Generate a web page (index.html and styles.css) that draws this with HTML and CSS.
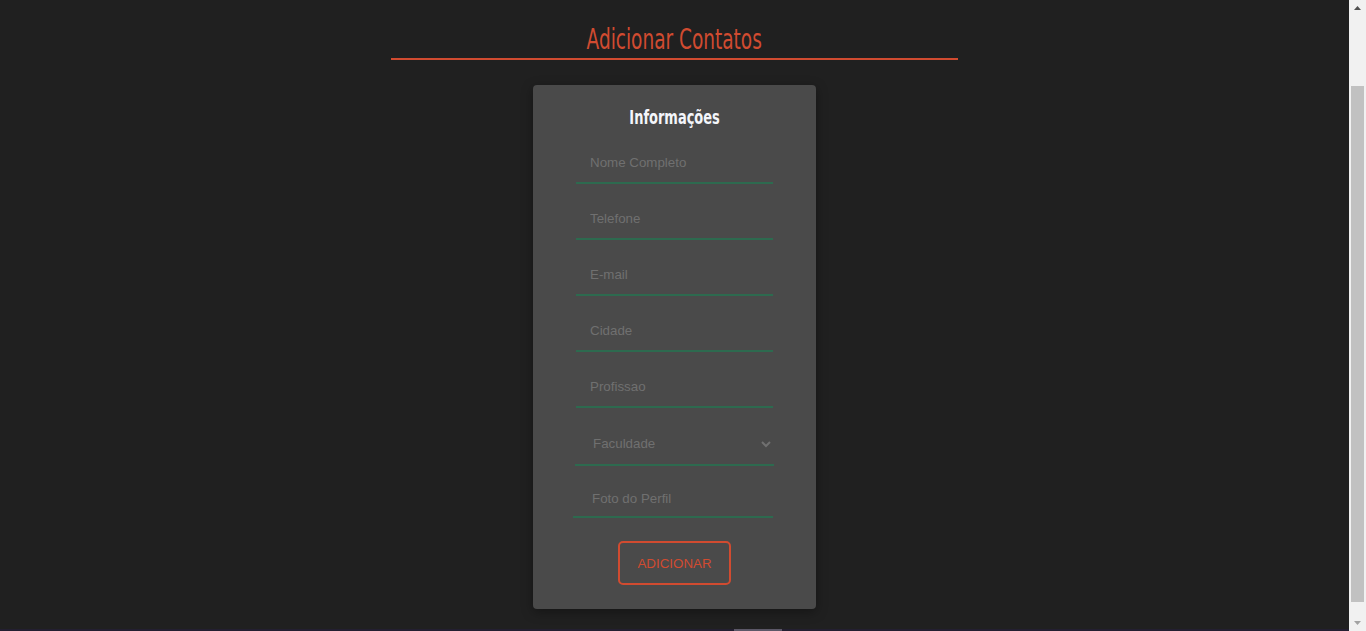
FILE: index.html
```html
<!DOCTYPE html>
<html lang="pt-BR">
<head>
<meta charset="utf-8">
<title>Adicionar Contatos</title>
<link rel="stylesheet" href="styles.css">
</head>
<body>
<header class="page-head">
  <h1 class="page-title"><span class="cond cond-title">Adicionar Contatos</span></h1>
</header>
<main class="main">
  <form class="card">
    <h2 class="card-title"><span class="cond cond-card">Informações</span></h2>
    <input class="field" type="text" placeholder="Nome Completo">
    <input class="field" type="tel" placeholder="Telefone">
    <input class="field" type="email" placeholder="E-mail">
    <input class="field" type="text" placeholder="Cidade">
    <input class="field" type="text" placeholder="Profissao">
    <select class="field select">
      <option>Faculdade</option>
    </select>
    <label class="field file">Foto do Perfil<input class="file-input" type="file"></label>
    <button class="btn" type="button">ADICIONAR</button>
  </form>
</main>
<footer class="footer"><span class="footer-bar"></span></footer>
<div class="scrollbar" aria-hidden="true">
  <svg class="sb-arrow" width="17" height="17" viewBox="0 0 17 17"><polygon points="8.5,6 12,10 5,10" fill="#505050"/></svg>
  <div class="sb-track"><div class="sb-thumb"></div></div>
  <svg class="sb-arrow" width="17" height="17" viewBox="0 0 17 17"><polygon points="5,7 12,7 8.5,11" fill="#a3a3a3"/></svg>
</div>
</body>
</html>
```
FILE: styles.css
```css
html {
  overflow: hidden;
}
body {
  margin: 0;
  padding-right: 17px;
  height: 631px;
  box-sizing: border-box;
  background: #202020;
  font-family: "Liberation Sans", Arial, sans-serif;
  display: flex;
  flex-direction: column;
}
.page-head {
  width: 567px;
  margin: 0 auto;
  padding-top: 24px;
  padding-bottom: 2px;
  border-bottom: 2px solid #d14b30;
}
.page-title {
  margin: 0;
  height: 32px;
  line-height: 32px;
  text-align: center;
  font-size: 28px;
  font-weight: normal;
  color: #d14b30;
}
.cond {
  display: inline-block;
  font-family: "DejaVu Sans Condensed", "DejaVu Sans", sans-serif;
  font-stretch: condensed;
}
.cond-title {
  transform: scaleX(0.735);
}
.cond-card {
  font-weight: bold;
  transform: scaleX(0.76);
}
.main {
  display: flex;
  justify-content: center;
  padding-top: 25px;
}
.card {
  width: 283px;
  box-sizing: border-box;
  background: #4a4a4a;
  border-radius: 4px;
  box-shadow: 0 3px 12px rgba(0, 0, 0, 0.35);
  padding: 20px 0 24px;
  display: flex;
  flex-direction: column;
  align-items: center;
}
.card-title {
  margin: 0 0 13px;
  height: 24px;
  line-height: 24px;
  font-size: 19px;
  font-weight: normal;
  color: #f4f6fb;
  text-align: center;
}
.field {
  display: block;
  box-sizing: border-box;
  width: 197px;
  height: 42px;
  margin: 0 0 14px;
  padding: 0 14px;
  border: none;
  border-bottom: 2px solid #2d6a4f;
  background: transparent;
  outline: none;
  font-family: "Liberation Sans", Arial, sans-serif;
  font-size: 13.333px;
  color: #707070;
}
.field::placeholder {
  color: #707070;
}
.select {
  width: 199px;
  height: 44px;
  padding-left: 14px;
  padding-right: 6px;
}
.file {
  width: 200px;
  height: 38px;
  align-self: flex-start;
  margin-left: 40px;
  padding-left: 19px;
  display: flex;
  align-items: center;
  cursor: pointer;
  margin-bottom: 23px;
}
.file-input {
  display: none;
}
.btn {
  width: 113px;
  height: 44px;
  box-sizing: border-box;
  border: 2px solid #d14b30;
  border-radius: 5px;
  background: transparent;
  color: #d14b30;
  font-family: "Liberation Sans", Arial, sans-serif;
  font-size: 13.333px;
  cursor: pointer;
}
.footer {
  margin-top: auto;
  height: 2px;
  flex-shrink: 0;
  background: #231f31;
  position: relative;
}
.footer-bar {
  position: absolute;
  left: 734px;
  top: 0;
  width: 48px;
  height: 2px;
  background: #5c5868;
}
.scrollbar {
  position: fixed;
  top: 0;
  right: 0;
  width: 17px;
  height: 631px;
  background: #f1f1f1;
  display: flex;
  flex-direction: column;
}
.sb-arrow {
  display: block;
  flex-shrink: 0;
}
.sb-track {
  flex: 1;
  padding: 69px 2px 12px;
  display: flex;
}
.sb-thumb {
  flex: 1;
  background: #c1c1c1;
}
```
